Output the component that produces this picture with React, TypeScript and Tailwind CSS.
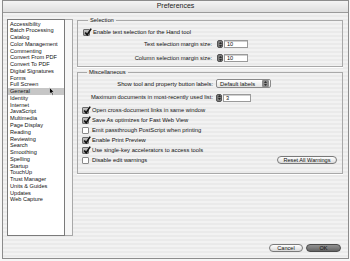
import React from 'react';

const categories = [
  'Accessibility', 'Batch Processing', 'Catalog', 'Color Management', 'Commenting',
  'Convert From PDF', 'Convert To PDF', 'Digital Signatures', 'Forms', 'Full Screen',
  'General', 'Identity', 'Internet', 'JavaScript', 'Multimedia', 'Page Display',
  'Reading', 'Reviewing', 'Search', 'Smoothing', 'Spelling', 'Startup', 'TouchUp',
  'Trust Manager', 'Units & Guides', 'Updates', 'Web Capture',
];

const miscChecks = [
  { label: 'Open cross-document links in same window', on: true },
  { label: 'Save As optimizes for Fast Web View', on: true },
  { label: 'Emit passthrough PostScript when printing', on: false },
  { label: 'Enable Print Preview', on: true },
  { label: 'Use single-key accelerators to access tools', on: true },
];

const CheckBox = ({ on }: { on: boolean }) => (
  <span
    className={`relative shrink-0 w-[7px] h-[7px] border rounded-[1px] ${on ? 'border-[#6a6a6a] bg-[linear-gradient(#c4c4c4,#9a9a9a)]' : 'border-[#8a8a8a] bg-white'}`}
  >
    {on && (
      <svg viewBox="0 0 10 10" className="absolute left-[0px] top-[-2px] w-[8px] h-[8px]">
        <path d="M1.5 5.5 L4 8.5 L9 0.8" stroke="#111" strokeWidth="2" fill="none" />
      </svg>
    )}
  </span>
);

const Arrows = () => (
  <>
    <svg viewBox="0 0 4 2" className="w-[3px] h-[2px]"><path d="M0 2 L2 0 L4 2Z" fill="#111" /></svg>
    <svg viewBox="0 0 4 2" className="w-[3px] h-[2px]"><path d="M0 0 L2 2 L4 0Z" fill="#111" /></svg>
  </>
);

const Spinner = () => (
  <span className="shrink-0 w-[6px] h-[8px] rounded-[2px] bg-[#7a7a7a] border border-[#555] flex flex-col items-center justify-center gap-[1px]">
    <Arrows />
  </span>
);

const NumberField = ({ value, width }: { value: string; width: string }) => (
  <div className="flex items-center">
    <Spinner />
    <span className={`${width} h-[8px] ml-[1px] bg-white border border-[#9a9a9a] shadow-[inset_0_1px_0_#cfcfcf] pl-[2px] leading-[6px] text-[5.6px]`}>
      {value}
    </span>
  </div>
);

const CheckRow = ({ label, on }: { label: string; on: boolean }) => (
  <div className="h-[10px] flex items-center gap-[3px]">
    <CheckBox on={on} />
    <span>{label}</span>
  </div>
);

const Cursor = () => (
  <svg viewBox="0 0 7 11" className="absolute left-[41px] top-[67px] w-[6px] h-[9px]">
    <path d="M0.5 0.5 L0.5 8.5 L2.5 6.8 L4 10 L5.3 9.4 L3.9 6.3 L6.3 6.3 Z" fill="#000" stroke="#fff" strokeWidth="0.7" />
  </svg>
);

export default function App() {
  return (
    <div className="w-[350px] h-[261px] bg-[#f6f6f6] font-['Liberation_Sans',Arial,sans-serif] text-[#111]">
      <div className="ml-[2px] w-[347px] h-[259px] border border-[#8c8c8c] flex flex-col bg-[repeating-linear-gradient(180deg,#f2f2f2_0px,#f2f2f2_2px,#eaeaea_2px,#eaeaea_4px)]">
        {/* title bar */}
        <div className="h-[12px] shrink-0 border-b border-[#9a9a9a] bg-[linear-gradient(#f4f4f4,#dedede)] flex items-center justify-center text-[7px] text-[#222]">
          Preferences
        </div>

        <div className="flex flex-1 pl-[4px] pr-[5px]">
          {/* category list */}
          <div className="mt-[6px] flex h-[217px] shrink-0">
            <div className="relative w-[58px] h-full bg-white border border-[#7a7a7a] pt-[0.5px] text-[5.6px]">
              {categories.map((c) => (
                <div
                  key={c}
                  className={`h-[6.77px] leading-[6.77px] pl-[2px] whitespace-nowrap ${c === 'General' ? 'bg-[#c6c6c6]' : ''}`}
                >
                  {c}
                </div>
              ))}
              <Cursor />
            </div>
            <div className="w-[8px] h-full bg-[#f6f6f6] border border-l-0 border-[#a8a8a8]" />
          </div>

          {/* right pane */}
          <div className="ml-[4px] mt-[4px] flex-1 text-[5.8px]">
            <fieldset className="border border-[#a9a9a9] shadow-[0_1px_0_#fff] pl-[5px] pr-[5px] pb-[4px]">
              <legend className="ml-[5px] px-[2px] leading-[7px] text-[5.8px]">Selection</legend>
              <div className="mt-[5px]">
                <div className="h-[7px] flex items-center gap-[3px]">
                  <CheckBox on={true} />
                  <span>Enable text selection for the Hand tool</span>
                </div>
              </div>
              <div className="mt-[4px] flex items-center">
                <span className="w-[129px] text-right">Text selection margin size:</span>
                <span className="ml-[5px]"><NumberField value="10" width="w-[24px]" /></span>
              </div>
              <div className="mt-[5px] flex items-center">
                <span className="w-[129px] text-right">Column selection margin size:</span>
                <span className="ml-[5px]"><NumberField value="10" width="w-[24px]" /></span>
              </div>
            </fieldset>

            <fieldset className="mt-[1.5px] border border-[#a9a9a9] shadow-[0_1px_0_#fff] pl-[4px] pr-[5px] pb-[8px]">
              <legend className="ml-[5px] px-[2px] leading-[7px] text-[5.8px]">Miscellaneous</legend>
              <div className="mt-[3.5px] flex items-center">
                <span className="w-[131px] text-right">Show tool and property button labels:</span>
                <div className="ml-[3px] w-[55px] h-[9px] flex items-center rounded-[2px] border border-[#8a8a8a] bg-[linear-gradient(#ffffff,#e4e4e4)]">
                  <span className="flex-1 pl-[3px]">Default labels</span>
                  <span className="w-[7px] h-[7px] mr-[1px] rounded-[1px] bg-[#8a8a8a] flex flex-col items-center justify-center gap-[1px]">
                    <Arrows />
                  </span>
                </div>
              </div>
              <div className="mt-[5px] flex items-center">
                <span className="w-[131px] text-right">Maximum documents in most-recently used list:</span>
                <span className="ml-[3px]"><NumberField value="3" width="w-[28px]" /></span>
              </div>
              <div className="mt-[3px] flex flex-col">
                {miscChecks.map((c) => (
                  <CheckRow key={c.label} label={c.label} on={c.on} />
                ))}
                <div className="h-[10px] flex items-center justify-between">
                  <div className="flex items-center gap-[3px]">
                    <CheckBox on={false} />
                    <span>Disable edit warnings</span>
                  </div>
                  <button className="w-[60px] h-[8px] -mt-[1px] rounded-full border border-[#7a7a7a] bg-[linear-gradient(#ffffff,#dcdcdc)] text-[5.6px] leading-[6px]">
                    Reset All Warnings
                  </button>
                </div>
              </div>
            </fieldset>
          </div>
        </div>

        {/* dialog buttons */}
        <div className="h-[11px] mb-[3px] flex items-start justify-end gap-[3px] pr-[7px]">
          <button className="w-[34px] h-[8px] rounded-full border border-[#7a7a7a] bg-[linear-gradient(#ffffff,#d8d8d8)] text-[5.6px] leading-[6px]">
            Cancel
          </button>
          <button className="w-[35px] h-[8px] rounded-full border border-[#4a4a4a] bg-[linear-gradient(#929292,#646464)] text-[5.6px] leading-[6px] text-[#111]">
            OK
          </button>
        </div>
      </div>
    </div>
  );
}
